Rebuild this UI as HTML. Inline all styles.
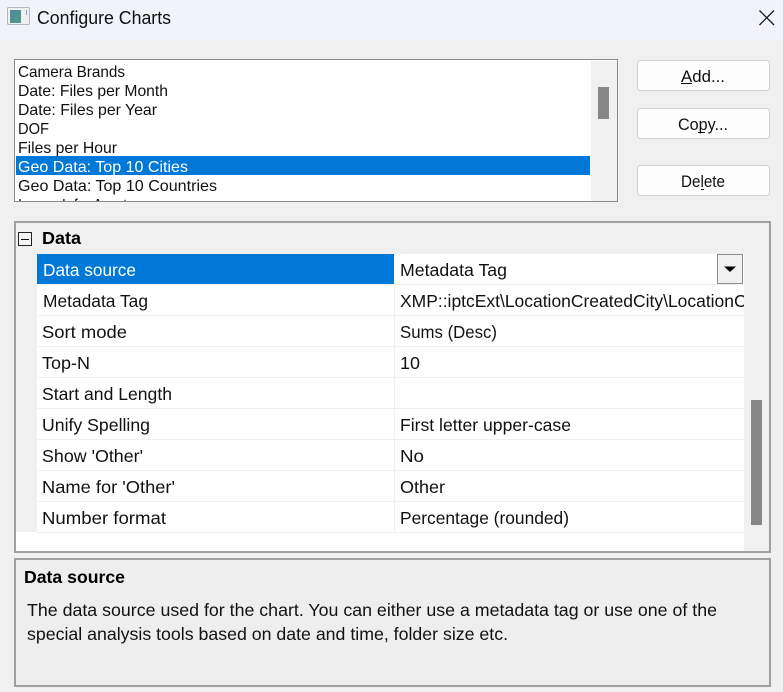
<!DOCTYPE html>
<html><head><meta charset="utf-8"><title>Configure Charts</title>
<style>
html,body{margin:0;padding:0;background:#f0f0f0;width:783px;height:692px;overflow:hidden}
svg{display:block}
text{font-family:"Liberation Sans",sans-serif;fill:#111;white-space:pre}
.l{font-size:16px}.g{font-size:17.5px}.b{font-size:16.5px}.h{font-size:17.5px;font-weight:bold;fill:#000}
</style></head><body>
<svg width="783" height="692" viewBox="0 0 783 692" xmlns="http://www.w3.org/2000/svg">
<defs>
<clipPath id="lc"><rect x="15" y="60" width="576" height="141"/></clipPath>
<clipPath id="gc"><rect x="395" y="285" width="349" height="30"/></clipPath>
<linearGradient id="ic" x1="0" y1="0" x2="1" y2="1"><stop offset="0" stop-color="#4f8a9c"/><stop offset="1" stop-color="#4f9a86"/></linearGradient>
</defs>
<rect width="783" height="692" fill="#f0f0f0"/>
<rect width="783" height="40" fill="#f0f3f9"/>
<rect x="7.500" y="7.500" width="22" height="17" rx="1" fill="#eef1f1" stroke="#b4b8b8"/>
<rect x="10" y="10" width="11" height="13" fill="url(#ic)"/>
<rect x="26" y="10" width="1" height="5" fill="#99a"/>
<text x="37" y="24" font-size="18" textLength="134" lengthAdjust="spacingAndGlyphs">Configure Charts</text>
<path d="M759.500 10.500L774 25M774 10.500L759.500 25" stroke="#1a1a1a" stroke-width="1.300" fill="none"/>

<rect x="14.500" y="59.500" width="603" height="142" fill="#fff" stroke="#8a8a8a"/>
<rect x="591" y="61" width="26" height="140" fill="#f0f0f0"/>
<rect x="598" y="87" width="11" height="32" fill="#868686"/>
<rect x="16" y="156" width="574" height="19" fill="#0078d7"/>
<g clip-path="url(#lc)">
<text class="l" x="18" y="77" textLength="107" lengthAdjust="spacingAndGlyphs">Camera Brands</text>
<text class="l" x="18" y="96" textLength="150" lengthAdjust="spacingAndGlyphs">Date: Files per Month</text>
<text class="l" x="18" y="115" textLength="139" lengthAdjust="spacingAndGlyphs">Date: Files per Year</text>
<text class="l" x="18" y="134" textLength="31" lengthAdjust="spacingAndGlyphs">DOF</text>
<text class="l" x="18" y="153" textLength="99" lengthAdjust="spacingAndGlyphs">Files per Hour</text>
<text class="l" x="18" y="172" textLength="170" lengthAdjust="spacingAndGlyphs" style="fill:#fff">Geo Data: Top 10 Cities</text>
<text class="l" x="18" y="191" textLength="199" lengthAdjust="spacingAndGlyphs">Geo Data: Top 10 Countries</text>
<text class="l" x="18" y="210" textLength="130" lengthAdjust="spacingAndGlyphs">Image Info: Aperture</text>
</g>

<rect x="637.500" y="60.500" width="132" height="30" rx="3" fill="#fdfdfd" stroke="#d0d0d0"/>
<rect x="637.500" y="108.500" width="132" height="30" rx="3" fill="#fdfdfd" stroke="#d0d0d0"/>
<rect x="637.500" y="165.500" width="132" height="30" rx="3" fill="#fdfdfd" stroke="#d0d0d0"/>
<text class="b" x="681" y="82" textLength="44" lengthAdjust="spacingAndGlyphs">Add...</text>
<rect x="681" y="83" width="11" height="1" fill="#111"/>
<text class="b" x="678" y="130" textLength="50" lengthAdjust="spacingAndGlyphs">Copy...</text>
<rect x="698" y="132" width="7" height="1" fill="#111"/>
<text class="b" x="681" y="187" textLength="44" lengthAdjust="spacingAndGlyphs">Delete</text>
<rect x="701" y="189" width="3" height="1" fill="#111"/>

<rect x="15" y="222" width="755" height="330" fill="#fff" stroke="#a0a0a0" stroke-width="2"/>
<rect x="16" y="223" width="728" height="31" fill="#f0f0f0"/>
<rect x="16" y="254" width="21" height="278" fill="#f0f0f0"/>
<rect x="744" y="223" width="25" height="328" fill="#f0f0f0"/>
<rect x="751" y="400" width="11" height="125" fill="#868686"/>
<rect x="37" y="254" width="357" height="30" fill="#0078d7"/>
<g fill="#f0f0f0">
<rect x="37" y="284" width="707" height="1"/><rect x="37" y="315" width="707" height="1"/>
<rect x="37" y="346" width="707" height="1"/><rect x="37" y="377" width="707" height="1"/>
<rect x="37" y="408" width="707" height="1"/><rect x="37" y="439" width="707" height="1"/>
<rect x="37" y="470" width="707" height="1"/><rect x="37" y="501" width="707" height="1"/>
<rect x="37" y="532" width="707" height="1"/><rect x="394" y="285" width="1" height="248"/>
</g>
<rect x="18.500" y="232.500" width="13" height="13" fill="#f5f5f5" stroke="#222"/>
<rect x="21" y="239" width="8" height="1" fill="#111"/>
<text class="h" x="42" y="244" textLength="39" lengthAdjust="spacingAndGlyphs">Data</text>

<text class="g" x="43" y="276" textLength="93" lengthAdjust="spacingAndGlyphs" style="fill:#fff">Data source</text>
<text class="g" x="43" y="307" textLength="105" lengthAdjust="spacingAndGlyphs">Metadata Tag</text>
<text class="g" x="42" y="338" textLength="85" lengthAdjust="spacingAndGlyphs">Sort mode</text>
<text class="g" x="42" y="369" textLength="48" lengthAdjust="spacingAndGlyphs">Top-N</text>
<text class="g" x="42" y="400" textLength="130" lengthAdjust="spacingAndGlyphs">Start and Length</text>
<text class="g" x="42" y="431" textLength="108" lengthAdjust="spacingAndGlyphs">Unify Spelling</text>
<text class="g" x="42" y="462" textLength="101" lengthAdjust="spacingAndGlyphs">Show 'Other'</text>
<text class="g" x="42" y="493" textLength="133" lengthAdjust="spacingAndGlyphs">Name for 'Other'</text>
<text class="g" x="42" y="524" textLength="124" lengthAdjust="spacingAndGlyphs">Number format</text>

<text class="g" x="400" y="276" textLength="107" lengthAdjust="spacingAndGlyphs">Metadata Tag</text>
<g clip-path="url(#gc)">
<text class="g" x="400" y="307" textLength="334" lengthAdjust="spacingAndGlyphs">XMP::iptcExt\LocationCreatedCity\Location</text>
<text class="g" x="734" y="307">CreatedCity</text>
</g>
<text class="g" x="400" y="338" textLength="97" lengthAdjust="spacingAndGlyphs">Sums (Desc)</text>
<text class="g" x="400" y="369" textLength="20" lengthAdjust="spacingAndGlyphs">10</text>
<text class="g" x="400" y="431" textLength="171" lengthAdjust="spacingAndGlyphs">First letter upper-case</text>
<text class="g" x="400" y="462" textLength="24" lengthAdjust="spacingAndGlyphs">No</text>
<text class="g" x="400" y="493" textLength="45" lengthAdjust="spacingAndGlyphs">Other</text>
<text class="g" x="400" y="524" textLength="169" lengthAdjust="spacingAndGlyphs">Percentage (rounded)</text>

<rect x="717.500" y="254.500" width="25" height="29" fill="#f0f0f0" stroke="#8f8f8f"/>
<path d="M724 266.500H736L730 272Z" fill="#000"/>

<rect x="15" y="559" width="755" height="127" fill="#eee" stroke="#a0a0a0" stroke-width="2"/>
<text class="h" x="24" y="583" textLength="101" lengthAdjust="spacingAndGlyphs">Data source</text>
<text class="g" x="27" y="616" textLength="690" lengthAdjust="spacingAndGlyphs">The data source used for the chart. You can either use a metadata tag or use one of the</text>
<text class="g" x="27" y="640" textLength="481" lengthAdjust="spacingAndGlyphs">special analysis tools based on date and time, folder size etc.</text>
</svg>
</body></html>
